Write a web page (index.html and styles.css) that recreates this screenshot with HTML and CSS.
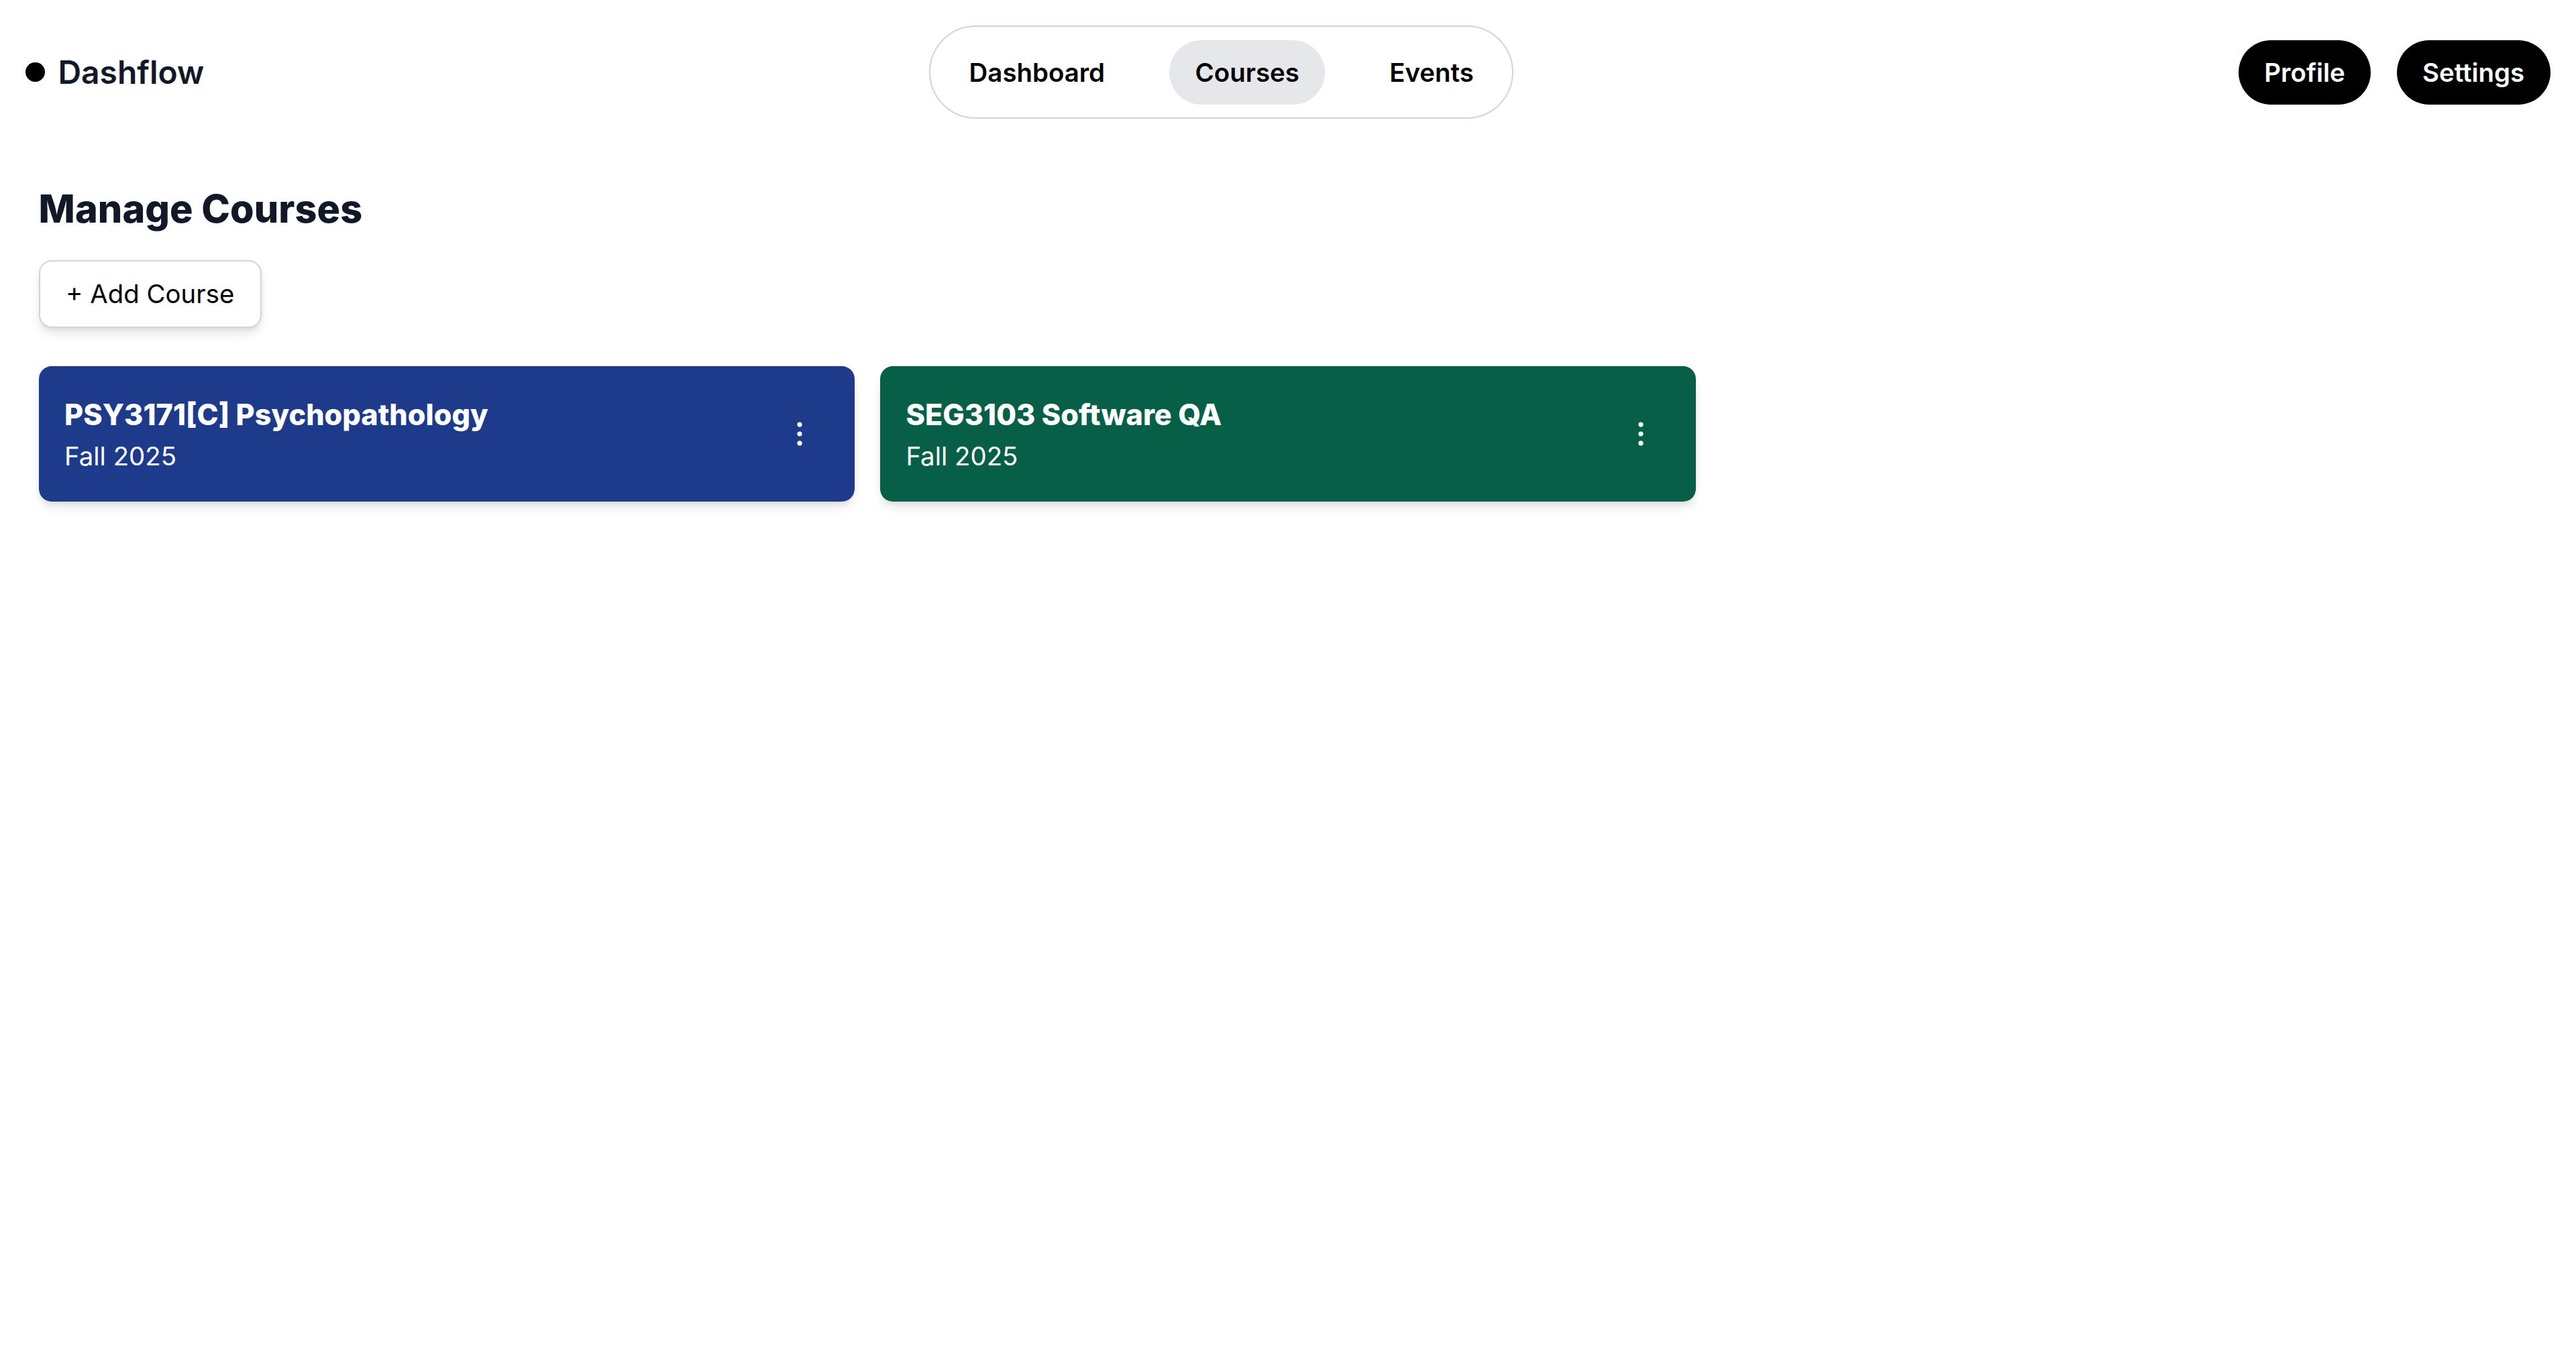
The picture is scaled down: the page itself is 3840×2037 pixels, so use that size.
FILE: index.html
```html
<!DOCTYPE html>
<html lang="en">
<head>
<meta charset="utf-8">
<title>Dashflow</title>
<link rel="stylesheet" href="styles.css">
</head>
<body>
<header class="topbar">
  <div class="brand">
    <span class="brand-dot"></span>
    <span class="brand-name">Dashflow</span>
  </div>
  <nav class="nav-pill">
    <a class="nav-item">Dashboard</a>
    <a class="nav-item active">Courses</a>
    <a class="nav-item">Events</a>
  </nav>
  <div class="actions">
    <button class="btn-dark">Profile</button>
    <button class="btn-dark">Settings</button>
  </div>
</header>
<main class="main">
  <h1 class="page-title">Manage Courses</h1>
  <button class="btn-add">+ Add Course</button>
  <div class="course-grid">
    <div class="course-card blue">
      <div class="course-info">
        <div class="course-title">PSY3171[C] Psychopathology</div>
        <div class="course-term">Fall 2025</div>
      </div>
      <button class="kebab" aria-label="More">
        <svg viewBox="0 0 20 20" width="48" height="48"><circle cx="10" cy="4.2" r="1.5" fill="#fff"/><circle cx="10" cy="10" r="1.5" fill="#fff"/><circle cx="10" cy="15.8" r="1.5" fill="#fff"/></svg>
      </button>
    </div>
    <div class="course-card green">
      <div class="course-info">
        <div class="course-title">SEG3103 Software QA</div>
        <div class="course-term">Fall 2025</div>
      </div>
      <button class="kebab" aria-label="More">
        <svg viewBox="0 0 20 20" width="48" height="48"><circle cx="10" cy="4.2" r="1.5" fill="#fff"/><circle cx="10" cy="10" r="1.5" fill="#fff"/><circle cx="10" cy="15.8" r="1.5" fill="#fff"/></svg>
      </button>
    </div>
  </div>
</main>
</body>
</html>
```
FILE: styles.css
```css
* { box-sizing: border-box; }
html, body {
  margin: 0;
  padding: 0;
  background: #ffffff;
  font-family: Inter, "Noto Sans", "Liberation Sans", sans-serif;
}
.topbar {
  display: flex;
  justify-content: space-between;
  align-items: center;
  padding: 38.4px;
}
.brand {
  display: flex;
  align-items: center;
  gap: 19.2px;
}
.brand-dot {
  width: 28.8px;
  height: 28.8px;
  border-radius: 50%;
  background: #000;
}
.brand-name {
  font-size: 48px;
  line-height: 67.2px;
  font-weight: 600;
  color: #111827;
}
.nav-pill {
  display: flex;
  align-items: center;
  gap: 57.6px;
  padding: 19.2px;
  border: 2.4px solid #d1d5db;
  border-radius: 9999px;
}
.nav-item {
  display: block;
  padding: 0 38.4px;
  height: 96px;
  line-height: 96px;
  border-radius: 9999px;
  font-size: 38.4px;
  font-weight: 600;
  color: #000;
}
.nav-item.active { background: #e5e7eb; }
.actions {
  display: flex;
  gap: 38.4px;
}
.btn-dark {
  height: 96px;
  padding: 0 38.4px;
  border: none;
  border-radius: 9999px;
  background: #000;
  color: #fff;
  font-family: inherit;
  font-size: 38.4px;
  font-weight: 600;
}
.main {
  padding: 57.6px;
}
.page-title {
  margin: 0 0 38.4px;
  font-size: 57.6px;
  line-height: 76.8px;
  font-weight: 800;
  color: #111827;
}
.btn-add {
  display: block;
  height: 100.8px;
  padding: 0 38.4px;
  background: #fff;
  border: 2.4px solid #d1d5db;
  border-radius: 19.2px;
  box-shadow: 0 9.6px 14.4px -2.4px rgba(0,0,0,0.1), 0 4.8px 9.6px -4.8px rgba(0,0,0,0.1);
  font-family: inherit;
  font-size: 38.4px;
  color: #000;
  margin-bottom: 57.6px;
}
.course-grid {
  display: grid;
  grid-template-columns: repeat(3, 1fr);
  gap: 38.4px;
}
.course-card {
  display: flex;
  justify-content: space-between;
  align-items: center;
  padding: 38.4px;
  border-radius: 19.2px;
  color: #fff;
  box-shadow: 0 9.6px 14.4px -2.4px rgba(0,0,0,0.1), 0 4.8px 9.6px -4.8px rgba(0,0,0,0.1);
}
.course-card.blue { background: #1e3a8a; }
.course-card.green { background: #065f46; }
.course-title {
  font-size: 43.2px;
  line-height: 67.2px;
  font-weight: 800;
}
.course-term {
  font-size: 38.4px;
  line-height: 57.6px;
}
.kebab {
  display: flex;
  padding: 19.2px;
  background: transparent;
  border: none;
}
```
